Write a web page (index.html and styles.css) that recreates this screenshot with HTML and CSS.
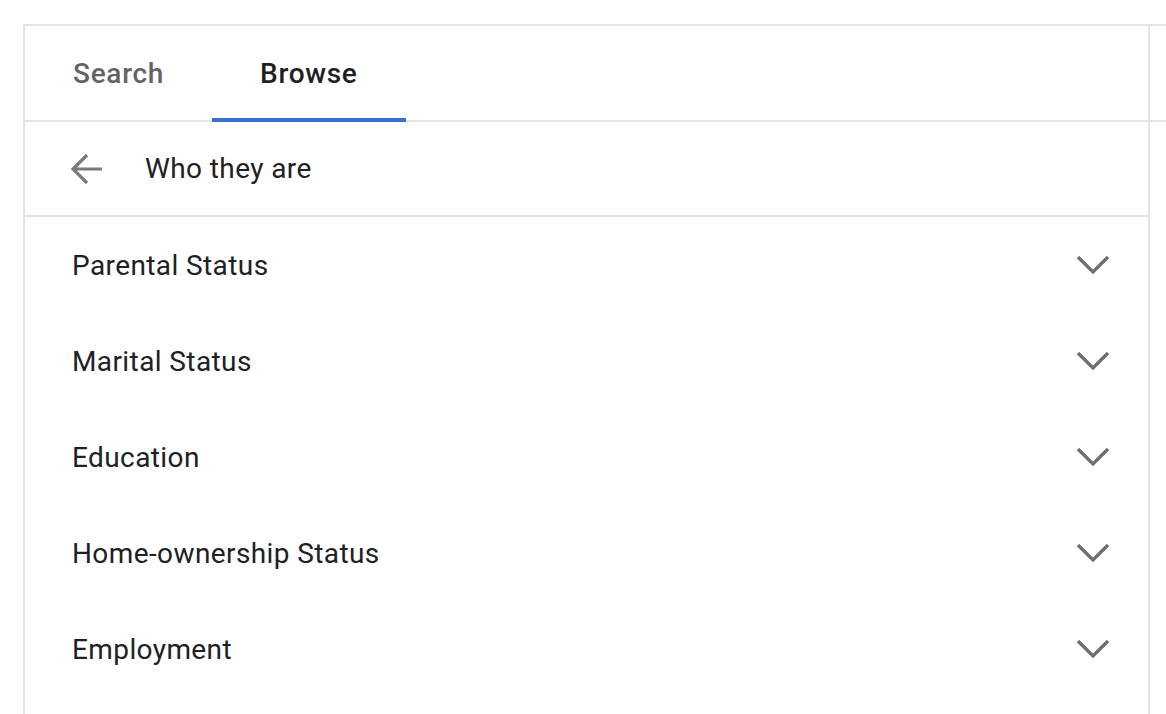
FILE: index.html
```html
<!DOCTYPE html>
<html>
<head>
<meta charset="utf-8">
<link rel="stylesheet" href="styles.css">
</head>
<body>
<div class="layout">
  <div class="panel">
    <div class="tabs">
      <div class="tab">Search</div>
      <div class="tab active">Browse</div>
    </div>
    <div class="back-row">
      <svg class="back-icon" width="34" height="34" viewBox="0 0 34 34">
        <path d="M32 17H4 M17 3L3 17L17 31" fill="none" stroke="#7b7b7b" stroke-width="3.2"/>
      </svg>
      <span class="back-label">Who they are</span>
    </div>
    <div class="list">
      <div class="row"><span class="label">Parental Status</span><svg class="chev" width="34" height="20" viewBox="0 0 34 20"><path d="M2 2L17 17L32 2" fill="none" stroke="#6e6e6e" stroke-width="3.3"/></svg></div>
      <div class="row"><span class="label">Marital Status</span><svg class="chev" width="34" height="20" viewBox="0 0 34 20"><path d="M2 2L17 17L32 2" fill="none" stroke="#6e6e6e" stroke-width="3.3"/></svg></div>
      <div class="row"><span class="label">Education</span><svg class="chev" width="34" height="20" viewBox="0 0 34 20"><path d="M2 2L17 17L32 2" fill="none" stroke="#6e6e6e" stroke-width="3.3"/></svg></div>
      <div class="row"><span class="label">Home-ownership Status</span><svg class="chev" width="34" height="20" viewBox="0 0 34 20"><path d="M2 2L17 17L32 2" fill="none" stroke="#6e6e6e" stroke-width="3.3"/></svg></div>
      <div class="row"><span class="label">Employment</span><svg class="chev" width="34" height="20" viewBox="0 0 34 20"><path d="M2 2L17 17L32 2" fill="none" stroke="#6e6e6e" stroke-width="3.3"/></svg></div>
    </div>
  </div>
  <div class="side">
    <div class="side-head"></div>
  </div>
</div>
</body>
</html>
```
FILE: styles.css
```css
html, body {
  margin: 0;
  padding: 0;
  background: #ffffff;
}
body {
  font-family: Roboto, "Liberation Sans", Arial, sans-serif;
  color: #202124;
  padding: 24px 0 0 23px;
  height: 714px;
  box-sizing: border-box;
  overflow: hidden;
}
.layout {
  display: flex;
  height: 100%;
}
.panel {
  width: 1127px;
  box-sizing: border-box;
  border-top: 2px solid #e3e3e3;
  border-left: 2px solid #e3e3e3;
  border-right: 2px solid #e3e3e3;
  display: flex;
  flex-direction: column;
}
.tabs {
  display: flex;
  height: 94px;
  border-bottom: 2px solid #e3e3e3;
}
.tab {
  padding: 0 48px;
  font-size: 28px;
  font-weight: 500;
  color: #646464;
  display: flex;
  align-items: center;
  position: relative;
  letter-spacing: 0.7px;
}
.tab.active {
  color: #202124;
}
.tab.active::after {
  content: "";
  position: absolute;
  left: 0;
  right: 0;
  bottom: -2px;
  height: 4px;
  background: #3b6fcf;
}
.back-row {
  height: 93px;
  border-bottom: 2px solid #e3e3e3;
  display: flex;
  align-items: center;
  padding-left: 45px;
}
.back-icon {
  display: block;
}
.back-label {
  margin-left: 41px;
  font-size: 28px;
  letter-spacing: 0.4px;
}
.list {
  display: flex;
  flex-direction: column;
}
.row {
  height: 96px;
  display: flex;
  align-items: center;
  justify-content: space-between;
  padding: 0 38px 0 47px;
}
.label {
  font-size: 28px;
  letter-spacing: 0.4px;
}
.chev {
  display: block;
}
.side {
  flex: 1;
  border-top: 2px solid #e3e3e3;
}
.side-head {
  height: 94px;
  border-bottom: 2px solid #e3e3e3;
}
```
